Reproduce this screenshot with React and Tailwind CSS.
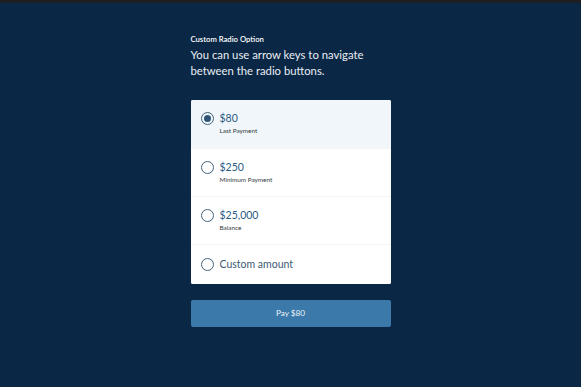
import React, { useState } from "react";

const options = [
  { value: "80", label: "$80", sub: "Last Payment" },
  { value: "250", label: "$250", sub: "Minimum Payment" },
  { value: "25000", label: "$25,000", sub: "Balance" },
  { value: "custom", label: "Custom amount", sub: null },
];

function Radio({ checked }) {
  return (
    <span className="flex h-[13px] w-[13px] shrink-0 items-center justify-center rounded-full border-[1.5px] border-[#42607b]">
      {checked && <span className="h-[7px] w-[7px] rounded-full bg-[#2e5577]" />}
    </span>
  );
}

export default function App() {
  const [sel, setSel] = useState("80");
  const current = options.find((o) => o.value === sel);
  return (
    <div
      className="flex min-h-[387px] w-full flex-col bg-[#0b2746]"
      style={{ fontFamily: "Lato, 'Open Sans', sans-serif" }}
    >
      <div className="h-[3px] w-full bg-[#1d1f22]" />
      <div className="mx-auto flex w-[200px] flex-col pt-[30px]">
        <div className="text-[7.7px] font-semibold leading-[12px] text-white">Custom Radio Option</div>
        <div className="mt-[2px] text-[11.3px] leading-[16px] text-[#e9eef3]">
          You can use arrow keys to navigate between the radio buttons.
        </div>
        <div className="mt-[21px] flex flex-col overflow-hidden rounded-[2px] bg-white">
          {options.map((o, i) => (
            <button
              key={o.value}
              onClick={() => setSel(o.value)}
              className={`flex gap-[6px] px-[10px] text-left ${
                o.sub ? "h-[48px] items-start pt-[12px]" : "h-[40px] items-center"
              } ${sel === o.value ? "bg-[#f0f6fa]" : "bg-white"} ${
                i > 0 ? "border-t border-[#f1f3f5]" : ""
              }`}
            >
              <Radio checked={sel === o.value} />
              <div className="flex flex-col">
                <span
                  className={`text-[10.5px] leading-[13px] ${
                    o.sub ? "text-[#2a5b84]" : "text-[#3d5a75]"
                  }`}
                >
                  {o.label}
                </span>
                {o.sub && (
                  <span className="mt-[2px] text-[6.4px] leading-[8px] text-[#333a40]">{o.sub}</span>
                )}
              </div>
            </button>
          ))}
        </div>
        <button className="mt-[16px] flex h-[27px] w-full items-center justify-center rounded-[2px] bg-[#3a79a9] text-[8.2px] text-[#eef4f9]">
          Pay {current.value === "custom" ? "" : current.label}
        </button>
      </div>
    </div>
  );
}
